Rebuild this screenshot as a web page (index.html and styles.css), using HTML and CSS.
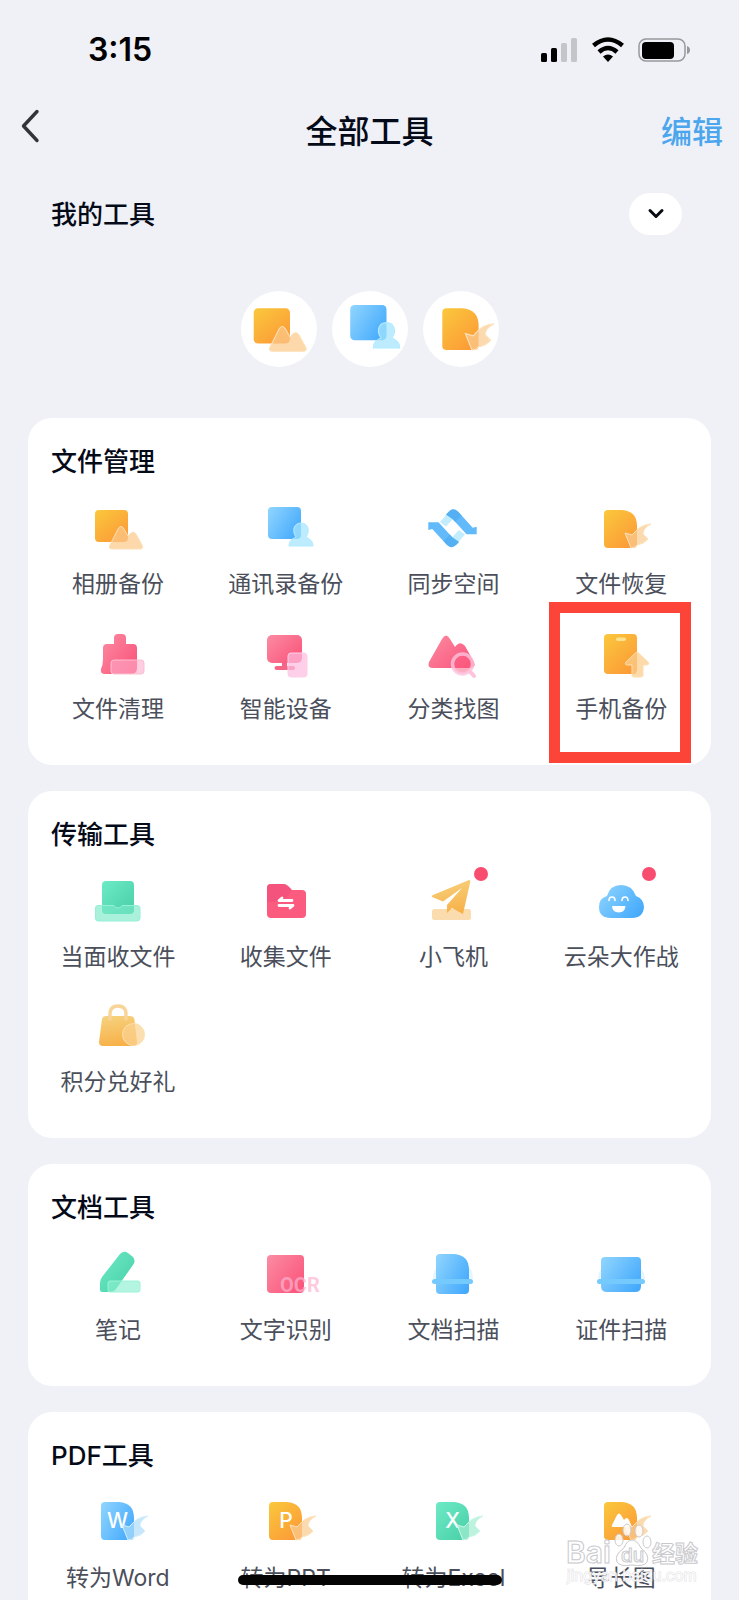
FILE: index.html
```html
<!DOCTYPE html>
<html lang="zh-CN">
<head>
<meta charset="utf-8">
<meta name="viewport" content="width=device-width, initial-scale=1">
<title>全部工具</title>
<link rel="stylesheet" href="styles.css">
</head>
<body>
<svg class="sprite" width="0" height="0" aria-hidden="true">
  <defs>
    <linearGradient id="orange" x1="0" y1="0" x2="0.8" y2="1"><stop offset="0" stop-color="#fac83c"/><stop offset="1" stop-color="#fc9a37"/></linearGradient>
    <linearGradient id="gold" x1="0.4" y1="0" x2="0.6" y2="1"><stop offset="0" stop-color="#f6d07c"/><stop offset="1" stop-color="#f8b047"/></linearGradient>
    <linearGradient id="blue" x1="0" y1="0.2" x2="1" y2="0.8"><stop offset="0" stop-color="#8bd2fe"/><stop offset="1" stop-color="#43a9fc"/></linearGradient>
    <linearGradient id="pink" x1="0" y1="0" x2="1" y2="0.8"><stop offset="0" stop-color="#fb8ca3"/><stop offset="1" stop-color="#fa567b"/></linearGradient>
    <linearGradient id="green" x1="0" y1="0" x2="1" y2="1"><stop offset="0" stop-color="#6deac6"/><stop offset="1" stop-color="#48cfa6"/></linearGradient>

    <symbol id="photo" viewBox="0 0 80 80">
      <rect x="17" y="23" width="33" height="32" rx="4" fill="url(#orange)"/>
      <path d="M32 58 L40 42 Q43 37 46 42 L50 49 L53 46 Q56 44 58 47 L64 58 Q66 62 62 62 H34 Q30 62 32 58Z" fill="#fbc98a" fill-opacity=".72" stroke="#fde0b6" stroke-width="1"/>
    </symbol>
    <symbol id="contact" viewBox="0 0 80 80">
      <rect x="22" y="20" width="33" height="32" rx="4" fill="url(#blue)"/>
      <path d="M43 59 C43 54 46 52 50 50 C46 45 47 36 55 36 C63 36 64 45 60 50 C64 52 67 54 67 59Z" fill="#a5e5fd" fill-opacity=".75" stroke="#b4ebff" stroke-width="1"/>
    </symbol>
    <symbol id="sync" viewBox="0 0 80 80">
      <g id="sync-half">
        <path d="M27 35 L34 27 L41 31 L33 39.500Z" fill="#c3ecff"/>
        <path d="M33 27.500 L36 24.500 Q40.500 20 45.500 25 L59.700 40.700 L63.700 39.700 V47.300 H53.500 L39.500 32Z" fill="#62bafa"/>
        <path d="M33 27.500 L36 24.500 Q40.500 20 45.500 25 L48.500 28.500 L42 35 L39.500 32Z" fill="#4da9ee" fill-opacity=".6"/>
      </g>
      <use href="#sync-half" transform="rotate(180 39.500 41.300)"/>
    </symbol>
    <symbol id="wing" viewBox="0 0 80 80">
      <path d="M44 46 L51 48 L54 45 Q59 38 70 37 Q62 41 62 47 L67 52 Q63 57 56 58 L54 60 L50 61Z" fill="#fbcc91" fill-opacity=".72" stroke="#fde2bb" stroke-width="1"/>
    </symbol>
    <symbol id="bluewing" viewBox="0 0 80 80">
      <path d="M44 46 L51 48 L54 45 Q59 38 70 37 Q62 41 62 47 L67 52 Q63 57 56 58 L54 60 L50 61Z" fill="#b0defa" fill-opacity=".72" stroke="#d3efff" stroke-width="1"/>
    </symbol>
    <symbol id="greenwing" viewBox="0 0 80 80">
      <path d="M44 46 L51 48 L54 45 Q59 38 70 37 Q62 41 62 47 L67 52 Q63 57 56 58 L54 60 L50 61Z" fill="#a4edd3" fill-opacity=".72" stroke="#cdf6e8" stroke-width="1"/>
    </symbol>
    <symbol id="sheet" viewBox="0 0 80 80">
      <path d="M27 23 H41 Q56 24 56 39 V57 Q56 61 52 61 H27 Q23 61 23 57 V27 Q23 23 27 23Z"/>
    </symbol>
    <symbol id="restore" viewBox="0 0 80 80">
      <use href="#sheet" fill="url(#orange)"/>
      <use href="#wing"/>
    </symbol>
    <symbol id="broom" viewBox="0 0 80 80">
      <path d="M36 32 V26 Q36 22 40 22 H44 Q48 22 48 26 V32 H55 Q59 32 59 36 V56 Q59 62 53 62 H27 Q22 62 23 57 Q25 53 25 47 V36 Q25 32 29 32Z" fill="url(#pink)"/>
      <rect x="33" y="48" width="33" height="14" rx="3" fill="#fdaecb" fill-opacity=".6" stroke="#fdbdd0" stroke-width="1"/>
    </symbol>
    <symbol id="monitor" viewBox="0 0 80 80">
      <rect x="21" y="23" width="35" height="28" rx="5" fill="url(#pink)"/>
      <path d="M36 51 H41 V54 H48 Q50 56 48 58 H30 Q27 56 30 54 H36Z" fill="#f56586"/>
      <rect x="42" y="41" width="19" height="24" rx="3" fill="#fdbde0" fill-opacity=".72" stroke="#fed0e8" stroke-width="1"/>
    </symbol>
    <symbol id="findpic" viewBox="0 0 80 80">
      <path d="M16 50 L29 27 Q33 20 37 27 L42 35 Q47 28 52 34 L61 50 Q63 56 57 56 H20 Q14 56 16 50Z" fill="url(#pink)"/>
      <circle cx="49.500" cy="52" r="10" fill="#fb5b82" fill-opacity=".5" stroke="#fdc3dc" stroke-opacity=".8" stroke-width="3.500"/>
      <path d="M57.500 60 L61 64" stroke="#fdc3dc" stroke-width="4" stroke-linecap="round"/>
    </symbol>
    <symbol id="phone" viewBox="0 0 80 80">
      <rect x="23" y="22" width="33" height="40" rx="4" fill="url(#orange)"/>
      <rect x="35" y="25.500" width="10" height="3.500" rx="1.700" fill="#fde18c"/>
      <path d="M54.500 41 Q56 39 57.500 41 L67 50 Q69 53 65 53 H62 V63 Q62 65 60 65 H53 Q51 65 51 63 V53 H47 Q43 53 45 50Z" fill="#fbcd8c" fill-opacity=".75" stroke="#fde0b4" stroke-width="1"/>
    </symbol>
    <symbol id="receive" viewBox="0 0 80 80">
      <rect x="24" y="21" width="32" height="33" rx="4" fill="url(#green)"/>
      <path d="M20 45.500 H36 Q37 48 40 48 Q43 48 44 45.500 H59 Q62 45.500 62 48 V58 Q62 61 59 61 H20 Q17.500 61 17.500 58 V48 Q17.500 45.500 20 45.500Z" fill="#7be9c8" fill-opacity=".65" stroke="#95f0d7" stroke-width="1"/>
    </symbol>
    <symbol id="folder" viewBox="0 0 80 80">
      <path d="M25 24 H37 Q40 24 42 26 L46 30 H56 Q60 30 60 34 V54 Q60 58 56 58 H25 Q21 58 21 54 V28 Q21 24 25 24Z" fill="#fb5b7f"/>
      <path d="M25 24 H37 Q40 24 42 26 L45 29 Q44 42 21 42 V28 Q21 24 25 24Z" fill="#f0507a" fill-opacity=".7"/>
      <path d="M46 40.500 H33 L36 38 M33 45.500 H47 L44 48" fill="none" stroke="#fff" stroke-width="2.800" stroke-linejoin="round" stroke-linecap="round"/>
    </symbol>
    <symbol id="plane" viewBox="0 0 80 80">
      <rect x="19" y="49" width="39" height="11" rx="2.500" fill="#fbdcae"/>
      <path d="M56 20 Q58 20 57 23 L50 54 L39 48 L34 53 V45 L49 28 L30 41.500 L19 37 Q18 36 20 35Z" fill="url(#gold)"/>
    </symbol>
    <symbol id="cloud" viewBox="0 0 80 80">
      <path d="M30 58 Q18 58 18 47 Q18 38 26 36 Q29 25 40 25 Q51 25 55 36 Q63 39 63 47 Q62 58 51 58Z" fill="url(#blue)"/>
      <path d="M28 40.500 Q28 37 31 37 Q34 37 34 40.500 M41 40.500 Q41 37 44 37 Q47 37 47 40.500" fill="none" stroke="#fff" stroke-width="1.600" stroke-linecap="round"/>
      <path d="M31 46 H44.500 Q44 52.500 37.700 52.500 Q31.500 52.500 31 46Z" fill="#fff"/>
    </symbol>
    <symbol id="bag" viewBox="0 0 80 80">
      <path d="M28 31 H52 Q56 31 56.500 35 L59 57 Q59 61 55 61 H25 Q21 61 21 57 L24 34 Q25 31 28 31Z" fill="url(#gold)"/>
      <path d="M32 34 V29 Q32 21 40 21 Q48 21 48 29 V34" fill="none" stroke="#f8d499" stroke-width="3.400" stroke-linecap="round"/>
      <circle cx="55.500" cy="49.500" r="11" fill="#fbd291" fill-opacity=".72" stroke="#fde0ad" stroke-width="1"/>
    </symbol>
    <symbol id="pen" viewBox="0 0 80 80">
      <path d="M42 21 Q46 17 50 20 L55 24 Q58 28 55 32 L38 56 Q36 59 33 59 H24 Q22 59 22 57 V50 Q22 47 24 44Z" fill="url(#green)"/>
      <rect x="30" y="48" width="32" height="11" rx="2" fill="#8af0d0" fill-opacity=".65" stroke="#9cf3d8" stroke-width="1"/>
    </symbol>
    <symbol id="ocr" viewBox="0 0 80 80">
      <rect x="21" y="22" width="37" height="38" rx="4" fill="url(#pink)"/>
      <text class="ocr-text" x="34" y="59" fill="#fdb3d0" fill-opacity=".7">OCR</text>
    </symbol>
    <symbol id="docscan" viewBox="0 0 80 80">
      <path d="M20 46 Q20 38 24 34 H56 Q60 38 60 46Z" fill="#e6f5ff"/>
      <path d="M27 21 H41 Q56 22 56 37 V57 Q56 61 52 61 H27 Q23 61 23 57 V25 Q23 21 27 21Z" fill="url(#blue)"/>
      <rect x="19" y="46" width="41" height="5" rx="2.500" fill="#75cafd"/>
    </symbol>
    <symbol id="idscan" viewBox="0 0 80 80">
      <path d="M17 46 Q17 40 20 36 H60 Q64 40 64 46Z" fill="#e6f5ff"/>
      <path d="M24 24 H56 Q60 24 60 28 V53 Q60 59 54 59 H26 Q20 59 20 53 V28 Q20 24 24 24Z" fill="url(#blue)"/>
      <rect x="16" y="46" width="48" height="5" rx="2.500" fill="#75cafd"/>
    </symbol>
    <symbol id="word" viewBox="0 2 80 80">
      <use href="#sheet" fill="url(#blue)"/>
      <text class="glyph" x="39.500" y="49" fill="#fff">W</text>
      <use href="#bluewing"/>
    </symbol>
    <symbol id="ppt" viewBox="0 2 80 80">
      <use href="#sheet" fill="url(#orange)"/>
      <text class="glyph" x="40" y="49" fill="#fff">P</text>
      <use href="#wing"/>
    </symbol>
    <symbol id="excel" viewBox="0 2 80 80">
      <use href="#sheet" fill="url(#green)"/>
      <text class="glyph" x="39.500" y="49" fill="#fff">X</text>
      <use href="#greenwing"/>
    </symbol>
    <symbol id="longpic" viewBox="0 2 80 80">
      <use href="#sheet" fill="url(#orange)"/>
      <path d="M31 46 L36 36 Q38 33 40 36 L43 41 Q46 37 48 41 L51 48 H32 Q30 48 31 46Z" fill="#fff"/>
      <use href="#wing"/>
    </symbol>
  </defs>
</svg>

<div class="screen">
  <div class="status">
    <span class="clock">3:15</span>
    <div class="status-icons">
      <svg width="38" height="26" viewBox="0 0 38 26" aria-hidden="true">
        <rect x="1" y="16" width="6" height="9" rx="1.500"/><rect x="11" y="11" width="6" height="14" rx="1.500"/>
        <rect x="21" y="6" width="6" height="19" rx="1.500" fill="#c4c5c9"/><rect x="31" y="1" width="6" height="24" rx="1.500" fill="#c4c5c9"/>
      </svg>
      <svg width="32" height="26" viewBox="0 0 32 26" aria-hidden="true">
        <path d="M1.500 8.500 Q16 -3.500 30.500 8.500 M7 15 Q16 7 25 15" fill="none" stroke="#000" stroke-width="4.500"/>
        <path d="M11 19.500 Q16 15.500 21 19.500 L16 25Z"/>
      </svg>
      <svg width="52" height="26" viewBox="0 0 52 26" aria-hidden="true">
        <rect x="1" y="2" width="46" height="22" rx="7" fill="none" stroke="#97989c" stroke-width="1.500"/>
        <rect x="4" y="5" width="32" height="17" rx="4"/><path d="M49 9 Q52 10 52 13 Q52 16 49 17Z" fill="#97989c"/>
      </svg>
    </div>
  </div>

  <header class="topbar">
    <button class="back" type="button" aria-label="返回">
      <svg width="20" height="34" viewBox="0 0 20 34" aria-hidden="true"><path d="M17 2.500 L3.500 17 L17 31.500" fill="none" stroke="#333437" stroke-width="3.400" stroke-linecap="round" stroke-linejoin="round"/></svg>
    </button>
    <h1 class="page-title">全部工具</h1>
    <button class="edit" type="button">编辑</button>
  </header>

  <main>
    <section class="mine">
      <div class="mine-head">
        <h2 class="section-title">我的工具</h2>
        <button class="toggle" type="button" aria-label="展开">
          <svg width="18" height="12" viewBox="0 0 18 12" aria-hidden="true"><path d="M3 2.500 L9 8.500 L15 2.500" fill="none" stroke="#080b12" stroke-width="3" stroke-linecap="round" stroke-linejoin="round"/></svg>
        </button>
      </div>
      <div class="shortcuts">
        <button class="shortcut" type="button" aria-label="相册备份"><svg class="shortcut-icon" aria-hidden="true"><use href="#photo"/></svg></button>
        <button class="shortcut" type="button" aria-label="通讯录备份"><svg class="shortcut-icon" aria-hidden="true"><use href="#contact"/></svg></button>
        <button class="shortcut" type="button" aria-label="文件恢复"><svg class="shortcut-icon" aria-hidden="true"><use href="#restore"/></svg></button>
      </div>
    </section>

    <div class="cards">
      <section class="card">
        <h2 class="section-title">文件管理</h2>
        <div class="grid">
          <button class="tool" type="button"><svg class="icon" aria-hidden="true"><use href="#photo"/></svg><span>相册备份</span></button>
          <button class="tool" type="button"><svg class="icon" aria-hidden="true"><use href="#contact"/></svg><span>通讯录备份</span></button>
          <button class="tool" type="button"><svg class="icon" aria-hidden="true"><use href="#sync"/></svg><span>同步空间</span></button>
          <button class="tool" type="button"><svg class="icon" aria-hidden="true"><use href="#restore"/></svg><span>文件恢复</span></button>
          <button class="tool" type="button"><svg class="icon" aria-hidden="true"><use href="#broom"/></svg><span>文件清理</span></button>
          <button class="tool" type="button"><svg class="icon" aria-hidden="true"><use href="#monitor"/></svg><span>智能设备</span></button>
          <button class="tool" type="button"><svg class="icon" aria-hidden="true"><use href="#findpic"/></svg><span>分类找图</span></button>
          <button class="tool marked" type="button"><svg class="icon" aria-hidden="true"><use href="#phone"/></svg><span>手机备份</span></button>
        </div>
      </section>

      <section class="card">
        <h2 class="section-title">传输工具</h2>
        <div class="grid">
          <button class="tool" type="button"><svg class="icon" aria-hidden="true"><use href="#receive"/></svg><span>当面收文件</span></button>
          <button class="tool" type="button"><svg class="icon" aria-hidden="true"><use href="#folder"/></svg><span>收集文件</span></button>
          <button class="tool fresh" type="button"><svg class="icon" aria-hidden="true"><use href="#plane"/></svg><span>小飞机</span></button>
          <button class="tool fresh" type="button"><svg class="icon" aria-hidden="true"><use href="#cloud"/></svg><span>云朵大作战</span></button>
          <button class="tool" type="button"><svg class="icon" aria-hidden="true"><use href="#bag"/></svg><span>积分兑好礼</span></button>
        </div>
      </section>

      <section class="card">
        <h2 class="section-title">文档工具</h2>
        <div class="grid">
          <button class="tool" type="button"><svg class="icon" aria-hidden="true"><use href="#pen"/></svg><span>笔记</span></button>
          <button class="tool" type="button"><svg class="icon" aria-hidden="true"><use href="#ocr"/></svg><span>文字识别</span></button>
          <button class="tool" type="button"><svg class="icon" aria-hidden="true"><use href="#docscan"/></svg><span>文档扫描</span></button>
          <button class="tool" type="button"><svg class="icon" aria-hidden="true"><use href="#idscan"/></svg><span>证件扫描</span></button>
        </div>
      </section>

      <section class="card">
        <h2 class="section-title">PDF工具</h2>
        <div class="grid">
          <button class="tool" type="button"><svg class="icon" aria-hidden="true"><use href="#word"/></svg><span>转为Word</span></button>
          <button class="tool" type="button"><svg class="icon" aria-hidden="true"><use href="#ppt"/></svg><span>转为PPT</span></button>
          <button class="tool" type="button"><svg class="icon" aria-hidden="true"><use href="#excel"/></svg><span>转为Excel</span></button>
          <button class="tool" type="button"><svg class="icon" aria-hidden="true"><use href="#longpic"/></svg><span>导长图</span></button>
        </div>
      </section>
    </div>
  </main>

  <div class="home-bar"></div>
  <div class="watermark">
    <svg width="134" height="70" viewBox="0 0 134 70" aria-label="Baidu 经验">
      <g fill="#fff" fill-opacity=".82" stroke="#c9c9cd" stroke-width="1">
        <text class="wm-name" x="0" y="43">Bai</text>
        <ellipse cx="61" cy="10" rx="4" ry="6"/><ellipse cx="73" cy="11" rx="4" ry="6"/>
        <ellipse cx="53" cy="20" rx="4" ry="6"/><ellipse cx="81" cy="22" rx="4" ry="6"/>
        <path d="M66 20 Q71 20 75 28 Q84 35 81 42 Q78 47 66 45 Q54 47 51 42 Q48 35 58 28 Q61 20 66 20Z"/>
        <text class="wm-du" x="55" y="42">du</text>
        <text class="wm-cn" x="86" y="42">经验</text>
      </g>
      <text class="wm-url" x="1" y="61" fill="#fff" fill-opacity=".85" stroke="#d3d3d6" stroke-opacity=".7">jingyan.baidu.com</text>
    </svg>
  </div>
</div>
</body>
</html>
```
FILE: styles.css
```css
* { box-sizing: border-box; }

body {
  margin: 0;
  background: #eff1f6;
  color: #050a18;
  font-family: "Inter", "Noto Sans CJK SC", sans-serif;
}

button {
  margin: 0;
  padding: 0;
  border: 0;
  background: none;
  color: inherit;
  font: inherit;
}

svg { display: block; }
h1, h2 { margin: 0; }

.sprite { position: absolute; }

.screen {
  position: relative;
  height: 100vh;
  overflow: hidden;
}

.status {
  display: flex;
  align-items: center;
  justify-content: space-between;
  height: 100px;
  padding: 0 49px 0 88px;
  color: #000;
}

.clock {
  font-size: 32px;
  font-weight: 600;
  line-height: 40px;
}

.status-icons {
  display: flex;
  align-items: center;
  gap: 14px;
}

.topbar {
  display: grid;
  grid-template-columns: 1fr auto 1fr;
  align-items: center;
  height: 64px;
  padding: 0 16px;
}

.back {
  justify-self: start;
  padding: 0 0 12px 4px;
}

.page-title {
  font-size: 32px;
  font-weight: 500;
  line-height: 40px;
}

.edit {
  justify-self: end;
  color: #4ba6ee;
  font-size: 31px;
  font-weight: 500;
  line-height: 40px;
}

.mine { padding: 29px 28px 0; }

.mine-head {
  display: flex;
  align-items: center;
  justify-content: space-between;
  padding-right: 29px;
}

.section-title {
  padding: 2px 0 0 23px;
  font-size: 26px;
  font-weight: 500;
  line-height: 40px;
}

.toggle {
  display: grid;
  place-items: center;
  width: 53px;
  height: 42px;
  border-radius: 21px;
  background: #fff;
}

.shortcuts {
  display: flex;
  justify-content: center;
  gap: 15px;
  margin-top: 56px;
}

.shortcut {
  display: grid;
  place-items: center;
  width: 76px;
  height: 76px;
  border-radius: 50%;
  background: #fff;
}

.shortcut-icon {
  width: 88px;
  height: 88px;
  margin: -8px -6px -4px;
}

.cards {
  display: grid;
  gap: 26px;
  margin-top: 51px;
  padding: 0 28px;
}

.card {
  padding: 22px 0 39px;
  border-radius: 24px;
  background: #fff;
}

.grid {
  display: grid;
  grid-template-columns: repeat(4, 1fr);
  row-gap: 11px;
  margin-top: 5px;
  padding: 0 6px;
}

.tool {
  position: relative;
  display: flex;
  flex-direction: column;
  align-items: center;
  color: #4b4f5b;
  font-size: 23px;
  line-height: 34px;
  white-space: nowrap;
}

.icon {
  width: 80px;
  height: 80px;
}

.fresh::before {
  content: "";
  position: absolute;
  top: 7px;
  left: calc(50% + 21px);
  width: 14px;
  height: 14px;
  border-radius: 50%;
  background: #f94d70;
}

.marked::after {
  content: "";
  position: absolute;
  inset: -10px 14px -37px 12px;
  border: 11px solid #fc4538;
}

.glyph {
  font-size: 21px;
  font-weight: 500;
  text-anchor: middle;
}

.ocr-text {
  font-family: Roboto, sans-serif;
  font-size: 20px;
  font-weight: 700;
}

.home-bar {
  position: absolute;
  bottom: 15px;
  left: 50%;
  width: 264px;
  height: 10px;
  margin-left: -132px;
  border-radius: 5px;
  background: #050505;
}

.watermark {
  position: absolute;
  right: 39px;
  bottom: 10px;
}

.wm-name {
  font-size: 30px;
  font-weight: 600;
}

.wm-du {
  font-size: 19px;
  font-weight: 500;
}

.wm-cn {
  font-size: 23px;
  font-weight: 700;
}

.wm-url {
  font-size: 15px;
  stroke-width: 1px;
  paint-order: stroke;
}
```
